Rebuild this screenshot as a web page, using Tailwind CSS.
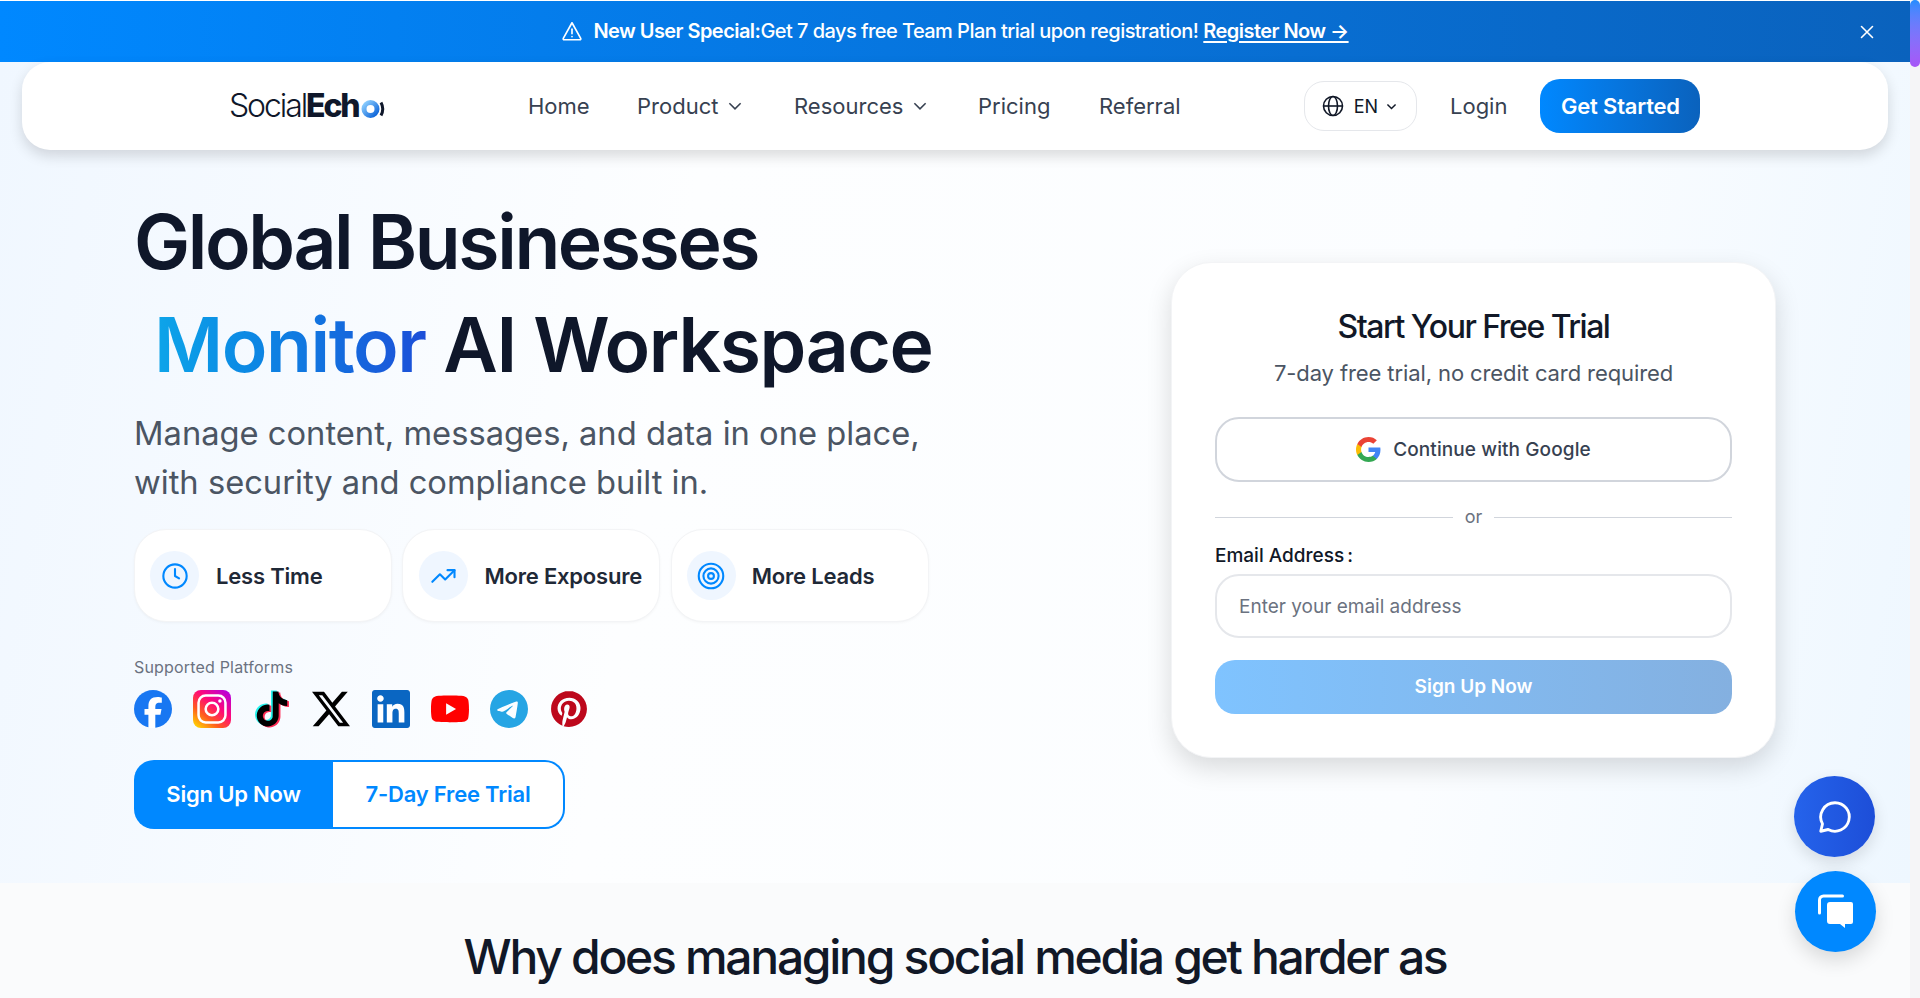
<!DOCTYPE html>
<html lang="en">
<head>
    <meta charset="UTF-8">
    <meta name="viewport" content="width=device-width, initial-scale=1.0">
    <title>SocialEcho</title>
    <script src="https://cdn.jsdelivr.net/npm/@tailwindcss/browser@4"></script>
</head>
<body class="h-[998px] overflow-hidden flex bg-white font-[family-name:Inter,sans-serif] text-gray-900">
    <div class="relative w-[1910px] h-[998px] overflow-hidden pt-px">
        <!-- Promo banner -->
        <div class="h-[61px] flex items-center justify-center relative text-white bg-gradient-to-r from-[#0088ff] to-[#0a62bd] text-[20px] font-medium pb-[2px]">
            <svg class="w-[22px] h-[22px] mr-[10px]" viewBox="0 0 24 24" fill="none" stroke="white" stroke-width="1.8" stroke-linecap="round" stroke-linejoin="round"><path d="M12 3 2.5 20a1 1 0 0 0 .9 1.5h17.2a1 1 0 0 0 .9-1.5L12 3Z"/><path d="M12 10v5"/><path d="M12 18v.2"/></svg>
            <span class="tracking-[-0.55px]"><span class="font-semibold">New User Special:</span>Get 7 days free Team Plan trial upon registration!</span>
            <a class="ml-[5px] underline underline-offset-[3px] font-semibold tracking-[-0.55px]">Register Now →</a>
            <svg class="absolute left-[1859px] top-[23px] w-[16px] h-[16px]" viewBox="0 0 16 16" stroke="white" stroke-width="1.6" stroke-linecap="round"><path d="M2.5 2.5l11 11M13.5 2.5l-11 11"/></svg>
        </div>

        <div class="h-[821px] bg-[linear-gradient(100deg,#f0f7ff,#fdfeff_35%,#fbfdff_75%,#eef7ff)]">
            <!-- Nav -->
            <nav class="mx-[22px] h-[88px] bg-white rounded-[28px] shadow-[0_6px_14px_rgba(0,0,0,0.14)] flex items-center pl-[207px] text-[#374151] text-[22px] relative">
                <div class="w-[299px] flex items-center text-[32px] leading-none text-[#0f172a] tracking-[-2.1px]">
                    <span class="font-light">Social</span><span class="font-extrabold">Ech</span>
                    <svg class="w-[26px] h-[22px] ml-[2px] mt-[5px]" viewBox="0 0 26 22"><defs><linearGradient id="ring" x1="0" y1="0" x2="1" y2="1"><stop offset="0" stop-color="#8fd0ff"/><stop offset="1" stop-color="#0a62d8"/></linearGradient></defs><circle cx="9.500" cy="11" r="6.500" fill="none" stroke="url(#ring)" stroke-width="5"/><path d="M20 4.500q3.500 6.500 0 13" fill="none" stroke="#0f172a" stroke-width="3"/></svg>
                </div>
                <div class="flex items-center">
                    <a class="w-[109px]">Home</a>
                    <a class="w-[157px] flex items-center">Product<svg class="w-[18px] h-[18px] ml-[8px]" viewBox="0 0 16 16" fill="none" stroke="#374151" stroke-width="1.4"><path d="M3 5.500l5 5 5-5"/></svg></a>
                    <a class="w-[184px] flex items-center">Resources<svg class="w-[18px] h-[18px] ml-[8px]" viewBox="0 0 16 16" fill="none" stroke="#374151" stroke-width="1.4"><path d="M3 5.500l5 5 5-5"/></svg></a>
                    <a class="w-[121px]">Pricing</a>
                    <a class="w-[124px]">Referral</a>
                </div>
                <button class="ml-[81px] w-[113px] h-[50px] rounded-[20px] border border-gray-200 flex items-center justify-center gap-[9px] text-[18px] text-gray-900">
                    <svg class="w-[24px] h-[24px] -ml-[2px]" viewBox="0 0 24 24" fill="none" stroke="#111827" stroke-width="1.600"><circle cx="12" cy="12" r="9.500"/><ellipse cx="12" cy="12" rx="4.500" ry="9.500"/><path d="M2.500 12h19"/></svg>
                    <span>EN</span>
                    <svg class="w-[13px] h-[13px] -ml-[2px]" viewBox="0 0 16 16" fill="none" stroke="#111827" stroke-width="1.800"><path d="M3 5.500l5 5 5-5"/></svg>
                </button>
                <a class="ml-[33px]">Login</a>
                <button class="ml-[33px] w-[160px] h-[54px] rounded-[20px] text-white font-semibold tracking-[-0.2px] bg-gradient-to-r from-[#0088ff] to-[#0a62bd]">Get Started</button>
            </nav>

            <!-- Hero -->
            <section class="flex pl-[134px] pt-[40px]">
                <div class="w-[1037px]">
                    <h1 class="text-[75px] leading-[103px] font-semibold text-[#0f172a]">
                        <span class="block tracking-[-2.4px]">Global Businesses</span>
                        <span class="block pl-[20px] tracking-[-1.4px]"><span class="bg-gradient-to-r from-[#0ea5e9] to-[#1d4ed8] bg-clip-text text-transparent">Monitor</span> AI Workspace</span>
                    </h1>
                    <p class="mt-[13px] text-[32.7px] leading-[49px] text-[#4b5563]">Manage content, messages, and data in one place,<br>with security and compliance built in.</p>

                    <div class="mt-[22px] flex gap-[10.4px]">
                        <div class="w-[258px] h-[93px] bg-white rounded-[32px] border border-gray-100 shadow-[0_1px_3px_rgba(0,0,0,0.04)] flex items-center pl-[15px] gap-[17px] text-[22px] font-semibold tracking-[-0.2px] text-[#1f2937]">
                            <span class="w-[49px] h-[49px] rounded-full bg-[#eff6ff] flex items-center justify-center"><svg class="w-[28px] h-[28px]" viewBox="0 0 24 24" fill="none" stroke="#0088ff" stroke-width="1.800" stroke-linecap="round" stroke-linejoin="round"><circle cx="12" cy="12" r="10"/><path d="M12 6v6l3.500 2"/></svg></span>
                            <span class="pt-[2px]">Less Time</span>
                        </div>
                        <div class="w-[258px] h-[93px] bg-white rounded-[32px] border border-gray-100 shadow-[0_1px_3px_rgba(0,0,0,0.04)] flex items-center pl-[16px] gap-[16px] text-[22px] font-semibold tracking-[-0.2px] text-[#1f2937]">
                            <span class="w-[49px] h-[49px] rounded-full bg-[#eff6ff] flex items-center justify-center"><svg class="w-[28px] h-[28px]" viewBox="0 0 24 24" fill="none" stroke="#0088ff" stroke-width="1.800" stroke-linecap="round" stroke-linejoin="round"><path d="M2 17l6.500-6.500 4.500 4.500 8-8"/><path d="M15 7h6v6"/></svg></span>
                            <span class="pt-[2px]">More Exposure</span>
                        </div>
                        <div class="w-[258px] h-[93px] bg-white rounded-[32px] border border-gray-100 shadow-[0_1px_3px_rgba(0,0,0,0.04)] flex items-center pl-[15px] gap-[16px] text-[22px] font-semibold tracking-[-0.2px] text-[#1f2937]">
                            <span class="w-[49px] h-[49px] rounded-full bg-[#eff6ff] flex items-center justify-center"><svg class="w-[28px] h-[28px]" viewBox="0 0 24 24" fill="none" stroke="#0088ff" stroke-width="1.800"><circle cx="12" cy="12" r="10.500"/><circle cx="12" cy="12" r="6.500"/><circle cx="12" cy="12" r="2.500"/></svg></span>
                            <span class="pt-[2px]">More Leads</span>
                        </div>
                    </div>

                    <p class="mt-[33px] text-[16px] leading-[24px] tracking-[0.18px] text-[#6b7280]">Supported Platforms</p>
                    <!-- Platform logos -->
                    <div class="mt-[11px] flex gap-[21.4px] items-center h-[38px]">
                        <svg class="w-[38px] h-[38px]" viewBox="0 0 24 24"><circle cx="12" cy="12" r="12" fill="#1877f2"/><path fill="#fff" d="M9.100 24v-8.300H6.630v-3.660H9.100v-1.580c0-4.080 1.850-5.980 5.860-5.980.4 0 .95.040 1.470.1.400.04.800.110 1.140.200v3.320c-.2-.020-.4-.030-.65-.040-.25 0-.5-.010-.73-.010-.71 0-1.260.1-1.680.31-.28.140-.52.350-.68.620-.26.420-.37 1-.37 1.750v1.300h3.920l-.39 2.100-.29 1.560h-3.240V24Z"/></svg>
                        <svg class="w-[38px] h-[38px]" viewBox="0 0 24 24"><defs><linearGradient id="ig" x1="0.100" y1="1" x2="0.900" y2="0"><stop offset="0" stop-color="#ffd600"/><stop offset="0.300" stop-color="#ff5a1f"/><stop offset="0.600" stop-color="#ff0a78"/><stop offset="1" stop-color="#b400e0"/></linearGradient></defs><rect width="24" height="24" rx="5" fill="url(#ig)"/><rect x="3.500" y="3.500" width="17" height="17" rx="4.500" fill="none" stroke="#fff" stroke-width="1.600"/><circle cx="12" cy="12" r="4" fill="none" stroke="#fff" stroke-width="1.600"/><circle cx="17" cy="7" r="1.100" fill="#fff"/></svg>
                        <svg class="w-[38px] h-[38px] p-[1.5px] overflow-visible" viewBox="0 0 24 24"><path fill="#25f4ee" transform="translate(-1.200 -.7)" d="M12.525.02c1.310-.02 2.610-.01 3.910-.02.080 1.530.630 3.090 1.750 4.170 1.120 1.110 2.700 1.620 4.240 1.790v4.030c-1.440-.05-2.890-.35-4.200-.97-.57-.26-1.100-.59-1.620-.93-.01 2.920.010 5.840-.02 8.750-.08 1.400-.54 2.790-1.350 3.940-1.310 1.920-3.580 3.170-5.910 3.210-1.430.080-2.860-.31-4.080-1.030-2.020-1.190-3.440-3.370-3.650-5.710-.02-.5-.03-1-.01-1.490.180-1.900 1.120-3.720 2.580-4.960 1.660-1.440 3.980-2.130 6.150-1.720.020 1.480-.04 2.960-.04 4.440-.99-.32-2.150-.23-3.020.37-.63.410-1.110 1.040-1.360 1.750-.21.510-.15 1.070-.14 1.610.240 1.640 1.820 3.020 3.500 2.870 1.120-.01 2.190-.66 2.770-1.610.190-.33.400-.67.410-1.060.1-1.790.060-3.570.070-5.360.010-4.030-.01-8.050.020-12.070z"/><path fill="#fe2c55" transform="translate(1.200 .7)" d="M12.525.02c1.310-.02 2.610-.01 3.910-.02.080 1.530.630 3.090 1.750 4.170 1.120 1.110 2.700 1.620 4.240 1.790v4.030c-1.440-.05-2.890-.35-4.200-.97-.57-.26-1.100-.59-1.620-.93-.01 2.920.010 5.840-.02 8.750-.08 1.400-.54 2.790-1.350 3.940-1.310 1.920-3.580 3.170-5.910 3.210-1.430.080-2.860-.31-4.080-1.030-2.020-1.190-3.440-3.370-3.650-5.710-.02-.5-.03-1-.01-1.490.180-1.900 1.120-3.720 2.580-4.960 1.660-1.440 3.980-2.130 6.150-1.720.020 1.480-.04 2.960-.04 4.440-.99-.32-2.150-.23-3.020.37-.63.410-1.110 1.040-1.360 1.750-.21.510-.15 1.070-.14 1.610.240 1.640 1.820 3.020 3.500 2.870 1.120-.01 2.190-.66 2.770-1.610.190-.33.400-.67.410-1.060.1-1.790.060-3.570.070-5.360.010-4.030-.01-8.050.020-12.070z"/><path fill="#000" d="M12.525.02c1.310-.02 2.610-.01 3.910-.02.080 1.530.630 3.090 1.750 4.170 1.120 1.110 2.700 1.620 4.240 1.790v4.030c-1.440-.05-2.890-.35-4.200-.97-.57-.26-1.100-.59-1.620-.93-.01 2.920.010 5.840-.02 8.750-.08 1.400-.54 2.790-1.350 3.940-1.310 1.920-3.580 3.170-5.910 3.210-1.430.080-2.860-.31-4.080-1.030-2.020-1.190-3.440-3.370-3.650-5.710-.02-.5-.03-1-.01-1.490.180-1.900 1.120-3.720 2.580-4.960 1.660-1.440 3.980-2.130 6.150-1.720.020 1.480-.04 2.960-.04 4.440-.99-.32-2.150-.23-3.020.37-.63.410-1.110 1.040-1.360 1.750-.21.510-.15 1.070-.14 1.610.240 1.640 1.820 3.020 3.500 2.870 1.120-.01 2.190-.66 2.770-1.610.190-.33.400-.67.410-1.060.1-1.790.060-3.570.070-5.360.010-4.030-.01-8.050.020-12.070z"/></svg>
                        <svg class="w-[38px] h-[38px]" viewBox="0 0 24 24"><path d="M18.901 1.153h3.680l-8.040 9.190L24 22.846h-7.406l-5.800-7.584-6.638 7.584H.474l8.600-9.830L0 1.154h7.594l5.243 6.932ZM17.610 20.644h2.039L6.486 3.240H4.298Z"/></svg>
                        <svg class="w-[38px] h-[38px]" viewBox="0 0 24 24"><rect x="1" y="1" width="22" height="22" fill="#fff"/><path fill="#0a66c2" d="M20.447 20.452h-3.554v-5.569c0-1.328-.027-3.037-1.852-3.037-1.853 0-2.136 1.445-2.136 2.939v5.667H9.351V9h3.414v1.561h.046c.477-.9 1.637-1.850 3.370-1.850 3.601 0 4.267 2.370 4.267 5.455v6.286zM5.337 7.433c-1.144 0-2.063-.926-2.063-2.065 0-1.138.920-2.063 2.063-2.063 1.140 0 2.064.925 2.064 2.063 0 1.139-.925 2.065-2.064 2.065zm1.782 13.019H3.555V9h3.564v11.452zM22.225 0H1.771C.792 0 0 .774 0 1.729v20.542C0 23.227.792 24 1.771 24h20.451C23.200 24 24 23.227 24 22.271V1.729C24 .774 23.200 0 22.222 0h.003z"/></svg>
                        <svg class="w-[38px] h-[38px]" viewBox="0 0 24 24"><path fill="#ff0000" d="M23.498 6.186a3.016 3.016 0 0 0-2.122-2.136C19.505 3.545 12 3.545 12 3.545s-7.505 0-9.377.505A3.017 3.017 0 0 0 .502 6.186C0 8.070 0 12 0 12s0 3.930.502 5.814a3.016 3.016 0 0 0 2.122 2.136c1.871.505 9.376.505 9.376.505s7.505 0 9.377-.505a3.015 3.015 0 0 0 2.122-2.136C24 15.930 24 12 24 12s0-3.930-.502-5.814zM9.545 15.568V8.432L15.818 12l-6.273 3.568z"/></svg>
                        <svg class="w-[38px] h-[38px]" viewBox="0 0 24 24"><path fill="#26a5e4" d="M11.944 0A12 12 0 0 0 0 12a12 12 0 0 0 12 12 12 12 0 0 0 12-12A12 12 0 0 0 12 0a12 12 0 0 0-.056 0zm4.962 7.224c.1-.002.321.023.465.14a.506.506 0 0 1 .171.325c.016.093.036.306.02.472-.18 1.898-.962 6.502-1.360 8.627-.168.9-.499 1.201-.82 1.230-.696.065-1.225-.46-1.900-.902-1.056-.693-1.653-1.124-2.678-1.800-1.185-.78-.417-1.210.258-1.910.177-.184 3.247-2.977 3.307-3.230.007-.032.014-.15-.056-.212s-.174-.041-.249-.024c-.106.024-1.793 1.140-5.061 3.345-.48.330-.913.490-1.302.480-.428-.008-1.252-.241-1.865-.44-.752-.245-1.349-.374-1.297-.789.027-.216.325-.437.893-.663 3.498-1.524 5.830-2.529 6.998-3.014 3.332-1.386 4.025-1.627 4.476-1.635z"/></svg>
                        <svg class="w-[38px] h-[38px] p-[1px]" viewBox="0 0 24 24"><path fill="#bd081c" d="M12.017 0C5.396 0 .029 5.367.029 11.987c0 5.079 3.158 9.417 7.618 11.162-.105-.949-.199-2.403.041-3.439.219-.937 1.406-5.957 1.406-5.957s-.359-.72-.359-1.781c0-1.663.967-2.911 2.168-2.911 1.024 0 1.518.769 1.518 1.688 0 1.029-.653 2.567-.992 3.992-.285 1.193.6 2.165 1.775 2.165 2.128 0 3.768-2.245 3.768-5.487 0-2.861-2.063-4.869-5.008-4.869-3.410 0-5.409 2.562-5.409 5.199 0 1.033.394 2.143.889 2.741.099.120.112.225.085.345-.09.375-.293 1.199-.334 1.363-.053.225-.172.271-.401.165-1.495-.69-2.433-2.878-2.433-4.646 0-3.776 2.748-7.252 7.920-7.252 4.158 0 7.392 2.967 7.392 6.923 0 4.135-2.607 7.462-6.233 7.462-1.214 0-2.354-.629-2.758-1.379l-.749 2.848c-.269 1.045-1.004 2.352-1.498 3.146 1.123.345 2.306.535 3.550.535 6.607 0 11.985-5.365 11.985-11.987C23.970 5.390 18.592.026 11.985.026L12.017 0z"/></svg>
                    </div>

                    <div class="mt-[32px] flex w-[431px] h-[69px] text-[22px] font-semibold tracking-[-0.2px]">
                        <a class="w-[199px] flex items-center justify-center rounded-l-[20px] bg-[#0088ff] text-white">Sign Up Now</a>
                        <a class="flex-1 flex items-center justify-center rounded-r-[20px] bg-white text-[#0088ff] border-2 border-l-0 border-[#0088ff]">7-Day Free Trial</a>
                    </div>
                </div>

                <!-- Sign up card -->
                <div class="mt-[72px] w-[605px] h-[496px] bg-white rounded-[40px] border border-gray-100 shadow-[0_10px_26px_rgba(0,0,0,0.14)] px-[43px] pt-[40px]">
                    <h2 class="text-center text-[32px] leading-[48px] font-medium tracking-[-1.5px] text-[#111827]">Start Your Free Trial</h2>
                    <p class="mt-[4px] text-center text-[22px] leading-[36px] tracking-[-0.1px] text-[#4b5563]">7-day free trial, no credit card required</p>
                    <button class="mt-[26px] w-full h-[65px] rounded-[24px] border-2 border-gray-300 flex items-center justify-center gap-[12px] text-[19px] font-medium tracking-[0.1px] text-[#374151]">
                        <svg class="w-[25px] h-[25px]" viewBox="0 0 24 24"><path fill="#4285f4" d="M23.490 12.270c0-.79-.07-1.540-.19-2.270H12v4.510h6.470c-.29 1.480-1.140 2.730-2.400 3.580v3h3.860c2.260-2.090 3.560-5.170 3.560-8.820z"/><path fill="#34a853" d="M12 24c3.240 0 5.950-1.080 7.930-2.910l-3.860-3c-1.080.72-2.450 1.160-4.070 1.160-3.130 0-5.780-2.110-6.730-4.960H1.290v3.090C3.260 21.300 7.310 24 12 24z"/><path fill="#fbbc05" d="M5.270 14.290c-.25-.72-.38-1.490-.38-2.290s.14-1.570.38-2.290V6.620H1.290C.47 8.240 0 10.060 0 12s.47 3.760 1.290 5.380l3.980-3.090z"/><path fill="#ea4335" d="M12 4.750c1.770 0 3.350.61 4.600 1.800l3.420-3.420C17.950 1.190 15.240 0 12 0 7.310 0 3.260 2.700 1.290 6.620l3.980 3.090C6.220 6.860 8.870 4.750 12 4.750z"/></svg>
                        <span class="pt-[2px]">Continue with Google</span>
                    </button>
                    <div class="mt-[24px] flex items-center gap-[12px] text-[18px] text-[#6b7280] leading-[22px]">
                        <span class="flex-1 h-px bg-gray-300"></span>or<span class="flex-1 h-px bg-gray-300"></span>
                    </div>
                    <label class="block mt-[14px] text-[19px] leading-[28px] font-medium text-[#111827]">Email Address<span class="ml-[3px]">:</span></label>
                    <div class="mt-[4px] h-[64px] rounded-[24px] border-2 border-gray-200 flex items-center pl-[22px] pt-[2px] text-[19px] text-[#6b7280]">Enter your email address</div>
                    <button class="mt-[22px] w-full h-[54px] rounded-[20px] text-white text-[19px] font-semibold bg-gradient-to-r from-[#7fc3ff] to-[#84b0e0]">Sign Up Now</button>
                </div>
            </section>
        </div>

        <!-- Next section -->
        <section class="h-[115px] bg-[#fafbfc] pt-[44px] text-center">
            <h2 class="text-[48px] leading-[60px] font-medium tracking-[-2.3px] text-[#111827]">Why does managing social media get harder as</h2>
        </section>

        <!-- Floating buttons -->
        <button class="absolute left-[1794px] top-[776px] w-[81px] h-[81px] rounded-full bg-gradient-to-r from-[#2563eb] to-[#1d4ed8] shadow-[0_6px_16px_rgba(0,0,0,0.12)] flex items-center justify-center">
            <svg class="w-[38px] h-[38px]" viewBox="0 0 24 24" fill="none" stroke="white" stroke-width="1.800" stroke-linejoin="round"><path d="M12 3a9 9 0 1 1-4.300 16.900L3 21l1.100-4.700A9 9 0 0 1 12 3Z"/></svg>
        </button>
        <button class="absolute left-[1795px] top-[871px] w-[81px] h-[81px] rounded-full bg-[#0088ff] shadow-[0_8px_20px_rgba(0,0,0,0.14)] flex items-center justify-center">
            <svg class="w-[38px] h-[36px]" viewBox="0 0 38 36" fill="white"><path d="M2.500 19V6a4 4 0 0 1 4-4h19" fill="none" stroke="white" stroke-width="3" stroke-linecap="round"/><path d="M10 11a3 3 0 0 1 3-3h21a2 2 0 0 1 2 2v18a2 2 0 0 1-2 2h-6v4l-5-4H13a3 3 0 0 1-3-3V11Z"/></svg>
        </button>
    </div>

    <!-- Scrollbar -->
    <div class="w-[10px] h-[998px] bg-[#f5f5f7]">
        <div class="w-full h-[67px] rounded-full bg-gradient-to-b from-[#1f8cff] to-[#a855f7]"></div>
    </div>
</body>
</html>
